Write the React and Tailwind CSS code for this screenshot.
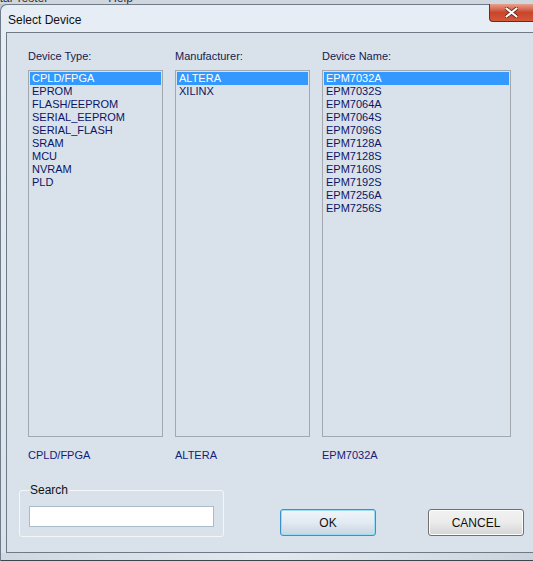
import { useState } from 'react';

const deviceTypes = ['CPLD/FPGA', 'EPROM', 'FLASH/EEPROM', 'SERIAL_EEPROM', 'SERIAL_FLASH', 'SRAM', 'MCU', 'NVRAM', 'PLD'];
const manufacturers = ['ALTERA', 'XILINX'];
const deviceNames = ['EPM7032A', 'EPM7032S', 'EPM7064A', 'EPM7064S', 'EPM7096S', 'EPM7128A', 'EPM7128S', 'EPM7160S', 'EPM7192S', 'EPM7256A', 'EPM7256S'];

function ListBox({ items, selected, onSelect, width }) {
  return (
    <div className={`${width} h-[367px] border border-[#a3a8ae] p-px overflow-hidden`}>
      {items.map((item) => (
        <div
          key={item}
          onClick={() => onSelect(item)}
          className={`h-[13px] leading-[13px] pl-[2px] text-[11px] ${item === selected ? 'bg-[#3399ff] text-white' : 'text-[#0b1466]'}`}
        >
          {item}
        </div>
      ))}
    </div>
  );
}

export default function App() {
  const [type, setType] = useState('CPLD/FPGA');
  const [maker, setMaker] = useState('ALTERA');
  const [device, setDevice] = useState('EPM7032A');

  return (
    <div className="w-[533px] h-[561px] overflow-hidden bg-[#bcc5cf] flex flex-col" style={{ fontFamily: '"Liberation Sans", Arial, sans-serif' }}>
      {/* parent window peeking above */}
      <div className="h-[5px] overflow-hidden bg-[#cfd6de] flex gap-[60px] text-[12px] leading-[12px] text-[#333]">
        <span className="-mt-[8px] -ml-[3px]">ital Tester</span>
        <span className="-mt-[8px]">Help</span>
      </div>

      {/* dialog window */}
      <div className="flex-1 flex flex-col rounded-tl-[7px] border-l border-t border-[#707b88] bg-gradient-to-b from-[#e6edf5] to-[#d9e2ec]">
        {/* title bar */}
        <div className="h-[27px] flex items-start">
          <div className="flex-1 pl-[7px] pt-[6px] text-[12px] text-[#111]">Select Device</div>
          <div className="w-[44px] h-[18px] -mt-px rounded-bl-[4px] border border-t-0 border-r-0 border-[#6b2a1e] bg-gradient-to-b from-[#e8a08c] via-[#c8452c] to-[#d4583a] flex items-center justify-center">
            <svg width="13" height="11" viewBox="0 0 13 11">
              <path d="M1.5 1.5 L11.5 9.5 M11.5 1.5 L1.5 9.5" stroke="#5a2018" strokeWidth="3.6" strokeLinecap="round" />
              <path d="M1.5 1.5 L11.5 9.5 M11.5 1.5 L1.5 9.5" stroke="#ffffff" strokeWidth="2.2" strokeLinecap="round" />
            </svg>
          </div>
        </div>

        {/* client area */}
        <div className="flex-1 ml-[5px] border-l border-t border-b border-[#6f7985] bg-[#d9e2eb] flex flex-col pl-[21px] pt-[17px]">
          <div className="flex gap-[12px]">
            <div className="flex flex-col">
              <div className="h-[20px] text-[11px] leading-[13px] text-[#141a50]">Device Type:</div>
              <ListBox items={deviceTypes} selected={type} onSelect={setType} width="w-[135px]" />
              <div className="mt-[12px] text-[11px] leading-[13px] text-[#14207a]">{type}</div>
            </div>
            <div className="flex flex-col">
              <div className="h-[20px] text-[11px] leading-[13px] text-[#141a50]">Manufacturer:</div>
              <ListBox items={manufacturers} selected={maker} onSelect={setMaker} width="w-[135px]" />
              <div className="mt-[12px] text-[11px] leading-[13px] text-[#14207a]">{maker}</div>
            </div>
            <div className="flex flex-col">
              <div className="h-[20px] text-[11px] leading-[13px] text-[#141a50]">Device Name:</div>
              <ListBox items={deviceNames} selected={device} onSelect={setDevice} width="w-[189px]" />
              <div className="mt-[12px] text-[11px] leading-[13px] text-[#14207a]">{device}</div>
            </div>
          </div>

          <div className="flex items-end mt-[21px]">
            <fieldset className="-ml-[9px] w-[205px] h-[54px] border border-[#f4f7fa] rounded-[3px] px-[9px]">
              <legend className="text-[12px] leading-[14px] text-[#111] px-px">Search</legend>
              <input className="mt-[9px] w-[185px] h-[21px] bg-white border border-[#abbacb] outline-none text-[12px] px-1" />
            </fieldset>
            <button className="ml-[56px] mb-[1px] w-[96px] h-[27px] rounded-[3px] border border-[#3c8fc7] shadow-[inset_0_0_0_1px_#9bdcf7] bg-gradient-to-b from-[#f0f5f9] via-[#e2eaf2] to-[#c9d5e1] text-[12px] text-[#111]">
              OK
            </button>
            <button className="ml-[52px] mb-[1px] w-[96px] h-[27px] rounded-[3px] border border-[#707070] shadow-[inset_0_0_0_1px_#fcfcfc] bg-gradient-to-b from-[#f2f2f2] via-[#ebebeb] to-[#d4d4d4] text-[12px] text-[#111]">
              CANCEL
            </button>
          </div>
          <div className="h-[15px]"></div>
        </div>

        {/* bottom frame */}
        <div className="h-[8px] border-b border-[#3d4650] bg-gradient-to-r from-[#cfd8e2] via-[#e3e9f0] to-[#cbd4de]"></div>
      </div>
    </div>
  );
}
